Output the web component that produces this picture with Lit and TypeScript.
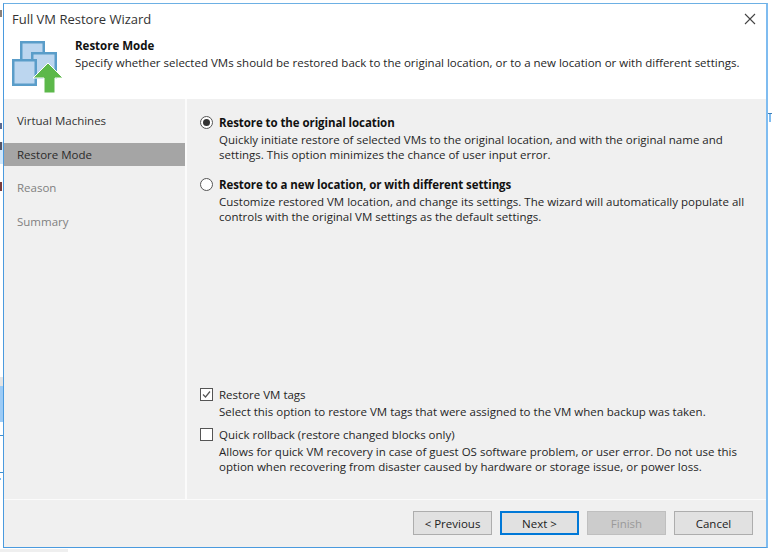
import { LitElement, html, css } from "lit";
import { customElement } from "lit/decorators.js";

const scraps = [
  { x: 0, y: 377, w: 3, h: 9, c: "#e4e4e4" },
  { x: 0, y: 386, w: 3, h: 36, c: "#9ccbf6" },
  { x: 0, y: 435, w: 3, h: 1, c: "#3f8fd0" },
  { x: 0, y: 472, w: 3, h: 1, c: "#3f8fd0" },
  { x: 0, y: 478, w: 1, h: 2, c: "#7fbcf0" },
  { x: 0, y: 10, w: 2, h: 7, c: "#8a8078" },
  { x: 0, y: 123, w: 2, h: 6, c: "#5a6a90" },
  { x: 0, y: 142, w: 3, h: 22, c: "#cfe6fa" },
  { x: 0, y: 142, w: 2, h: 8, c: "#555566" },
  { x: 0, y: 182, w: 2, h: 9, c: "#7a3a3a" },
  { x: 768, y: 113, w: 4, h: 1, c: "#3d7fb8" },
  { x: 769, y: 114, w: 2, h: 8, c: "#7fbcf0" },
  { x: 0, y: 549, w: 68, h: 3, c: "#efefef" },
];

@customElement("app-root")
export class AppRoot extends LitElement {
  static styles = css`
    :host { display: block; position: relative; width: 772px; height: 552px; overflow: hidden; background: #fff; font-family: "Open Sans", "Noto Sans", sans-serif; font-size: 11.5px; color: #262626; box-sizing: border-box; padding: 3px 4px 3px 3px; }
    .scrap { position: absolute; }
    .win { position: relative; height: 545px; box-sizing: border-box; border-style: solid; border-width: 1px 2px 1px 1px; border-color: #6db0e4 #7fbcf0 #4a9ade #4a9ade; display: flex; flex-direction: column; background: #f0f0f0; }
    .title { background: #fff; height: 29px; display: flex; align-items: center; justify-content: space-between; padding: 0 10px 0 8px; font-size: 13px; color: #333; }
    .close { display: flex; }
    .head { background: #fff; height: 66px; display: flex; }
    .logo { width: 71px; padding: 6.5px 0 0 8px; box-sizing: border-box; }
    .head h1 { margin: 0; font-size: 11.5px; font-weight: 700; color: #111; line-height: 16px; padding-top: 5px; }
    .head p { margin: 0; line-height: 18px; }
    .body { flex: 1; display: flex; min-height: 0; }
    .side { width: 183px; box-sizing: border-box; padding-top: 10px; border-right: 2px solid #fbfbfb; }
    .step { height: 23px; margin-bottom: 10.5px; padding-left: 13px; display: flex; align-items: center; color: #333; }
    .step.cur { background: #a5a5a5; color: #2b2b2b; }
    .step.off { color: #808080; }
    .main { flex: 1; padding: 16px 0 0 13px; display: flex; flex-direction: column; }
    .opt { display: grid; grid-template-columns: 19px 1fr; line-height: 15px; }
    .opt b { color: #111; font-weight: 700; line-height: 15px; letter-spacing: -0.08px; }
    .opt .label { line-height: 15px; }
    .opt p { grid-column: 2; margin: 0; line-height: 15px; padding-top: 2px; }
    .radio { width: 13px; height: 13px; box-sizing: border-box; border: 1px solid #555; border-radius: 50%; background: #fff; display: flex; align-items: center; justify-content: center; margin-top: 1px; }
    .radio.on::after { content: ""; width: 7px; height: 7px; border-radius: 50%; background: #333; }
    .box { width: 13px; height: 13px; box-sizing: border-box; border: 1px solid #555; background: #fff; display: flex; margin-top: 1px; }
    .gap1 { margin-top: 15px; }
    .spacer { flex: 1; }
    .gap2 { margin-top: 8px; }
    .pad { height: 25px; }
    .foot { height: 48px; box-sizing: border-box; border-top: 1px solid #fbfbfb; display: flex; justify-content: flex-end; align-items: flex-start; gap: 8px; padding: 11px 13px 0 0; }
    button { width: 79px; height: 24px; font: inherit; color: #222; background: #e1e1e1; border: 1px solid #adadad; padding: 0; }
    button.def { border: 2px solid #0078d7; }
    button:disabled { background: #cccccc; border-color: #bfbfbf; color: #9a9a9a; }
  `;
  render() {
    return html`${scraps.map((s) => html`<div class="scrap" style="left:${s.x}px;top:${s.y}px;width:${s.w}px;height:${s.h}px;background:${s.c}"></div>`)}
    <div class="win">
      <div class="title"><span>Full VM Restore Wizard</span>
        <svg class="close" width="12" height="12" viewBox="0 0 12 12"><path d="M1 1 11 11M11 1 1 11" stroke="#444" stroke-width="1.1" fill="none"/></svg>
      </div>
      <div class="head">
        <div class="logo"><svg width="54" height="55" viewBox="0 0 54 55">
          <rect x="9.25" y="2.25" width="22.5" height="24" fill="#bcd6ef" stroke="#5a9dc9" stroke-width="2.5"/>
          <rect x="20.25" y="13.25" width="23.5" height="24" fill="#bcd6ef" stroke="#5a9dc9" stroke-width="2.5"/>
          <rect x="1.25" y="20.25" width="22.5" height="24.5" fill="#bcd6ef" stroke="#5a9dc9" stroke-width="2.5"/>
          <path d="M36 23 51 38H43V53H32V38H21Z" fill="#5cb84a" stroke="#fff" stroke-width="1"/>
        </svg></div>
        <div><h1>Restore Mode</h1><p>Specify whether selected VMs should be restored back to the original location, or to a new location or with different settings.</p></div>
      </div>
      <div class="body">
        <div class="side">
          <div class="step">Virtual Machines</div>
          <div class="step cur">Restore Mode</div>
          <div class="step off">Reason</div>
          <div class="step off">Summary</div>
        </div>
        <div class="main">
          <div class="opt"><span class="radio on"></span><b>Restore to the original location</b>
            <p>Quickly initiate restore of selected VMs to the original location, and with the original name and<br>settings. This option minimizes the chance of user input error.</p></div>
          <div class="opt gap1"><span class="radio"></span><b>Restore to a new location, or with different settings</b>
            <p>Customize restored VM location, and change its settings. The wizard will automatically populate all<br>controls with the original VM settings as the default settings.</p></div>
          <div class="spacer"></div>
          <div class="opt"><span class="box"><svg width="11" height="11" viewBox="0 0 11 11"><path d="M2 5.5 4.5 8 9 2.5" stroke="#555" stroke-width="1.2" fill="none"/></svg></span><span class="label">Restore VM tags</span>
            <p>Select this option to restore VM tags that were assigned to the VM when backup was taken.</p></div>
          <div class="opt gap2"><span class="box"></span><span class="label">Quick rollback (restore changed blocks only)</span>
            <p>Allows for quick VM recovery in case of guest OS software problem, or user error. Do not use this<br>option when recovering from disaster caused by hardware or storage issue, or power loss.</p></div>
          <div class="pad"></div>
        </div>
      </div>
      <div class="foot"><button>&lt; Previous</button><button class="def">Next &gt;</button><button disabled>Finish</button><button>Cancel</button></div>
    </div>`;
  }
}
